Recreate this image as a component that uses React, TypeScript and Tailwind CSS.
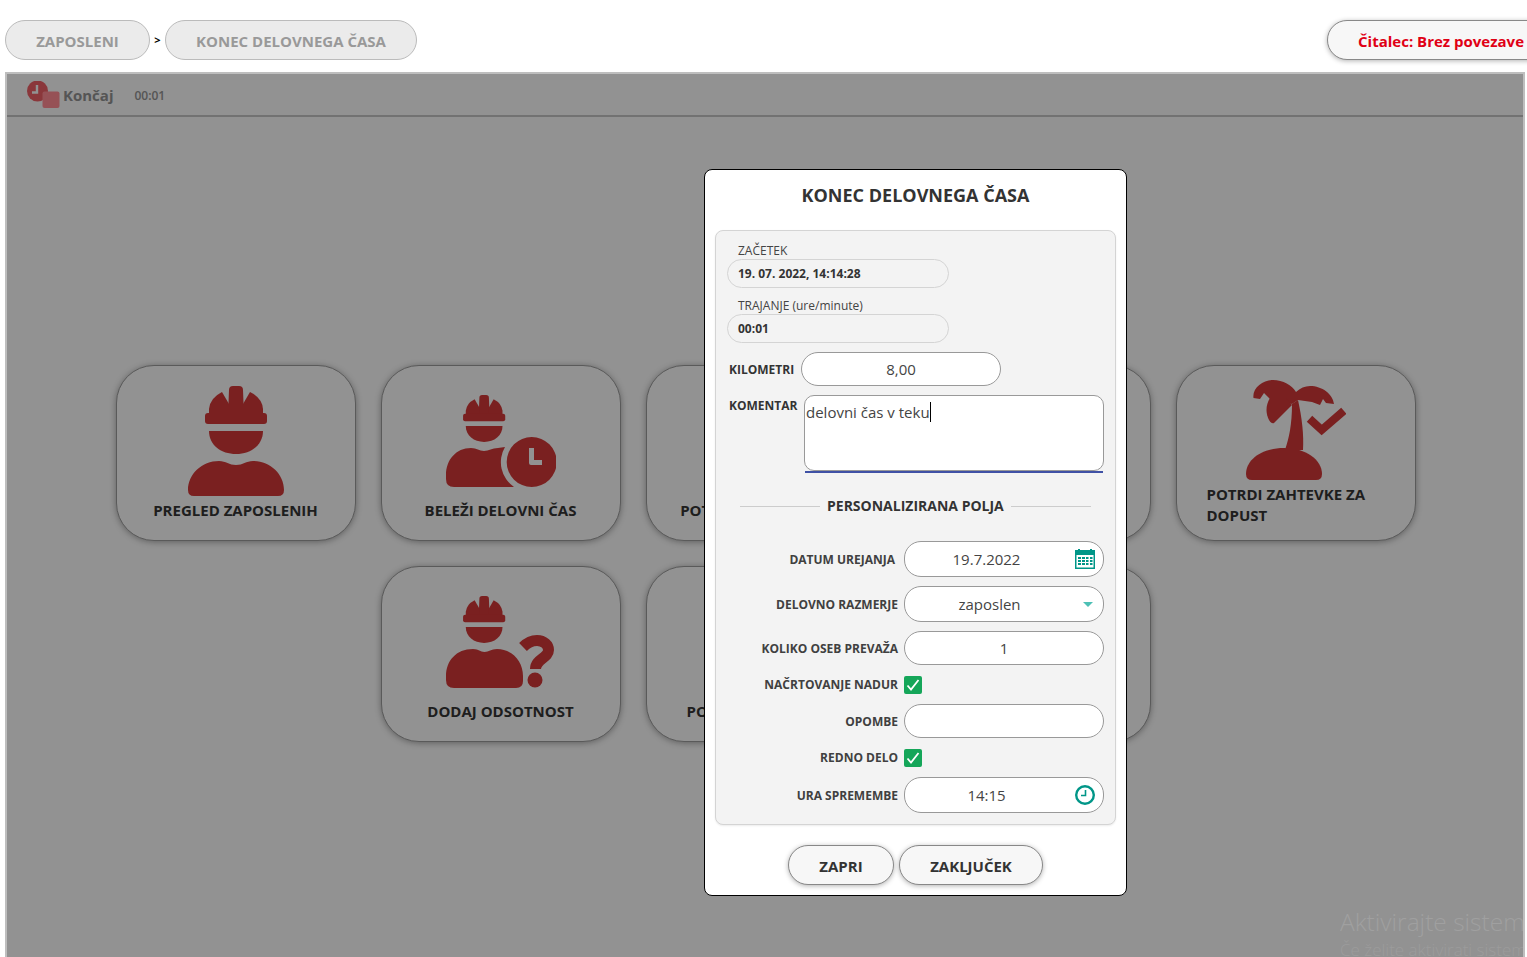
import React from "react";

const Helmet = () => (
  <>
    <path d="M41 4Q41 0 45 0H51Q55 0 55 4L56 30H40Z" />
    <path d="M34 6L41 18V30H21V23Q22 12 34 6Z" />
    <path d="M62 6L55 18V30H75V23Q74 12 62 6Z" />
    <rect x="17" y="27" width="62" height="11" rx="3" />
    <path d="M21 45H75C75 59 63 68 48 68C33 68 21 59 21 45Z" />
  </>
);

const WorkerIcon = () => (
  <svg width="96" height="110" viewBox="0 0 96 110" className="fill-[#cb3636]">
    <Helmet />
    <path d="M0 104C0 88 14 75 31 75C38 75 41 79 48 79C55 79 58 75 65 75C82 75 96 88 96 104Q96 110 90 110H6Q0 110 0 104Z" />
  </svg>
);

const WorkerClockIcon = () => (
  <svg width="110" height="93" viewBox="0 0 110 93" className="fill-[#cb3636]">
    <g transform="translate(5.5 0) scale(0.68 0.69)">
      <Helmet />
    </g>
    <path d="M0 80C0 65 10 53 25 53C31 53 33 56 38 56C43 56 46 53 52 53L59 52A30 30 0 0 0 68 92H8Q0 92 0 84Z" />
    <path
      fillRule="evenodd"
      d="M85.7 42A25 25 0 1 1 85.7 92A25 25 0 1 1 85.7 42ZM83 53V68Q83 70 85 70H96V65H88V53Z"
    />
  </svg>
);

const WorkerQuestionIcon = () => (
  <svg width="110" height="93" viewBox="0 0 110 93" className="fill-[#cb3636]">
    <g transform="translate(5.5 0) scale(0.68 0.69)">
      <Helmet />
    </g>
    <path d="M0 80C0 65 10 53 27 53C33 53 34 56 38.5 56C43 56 45 53 51 53C66 53 77 65 77 80V85Q77 92 70 92H8Q0 92 0 84Z" />
    <path
      d="M77 51C81 47 86 44.5 91 44.5C98 44.5 102.5 49 102.5 54C102.5 62 89.5 63 89.5 73"
      fill="none"
      stroke="#cb3636"
      strokeWidth="11"
    />
    <circle cx="89" cy="84" r="7.5" />
  </svg>
);

const PalmIcon = () => (
  <svg width="100" height="100" viewBox="0 0 100 100" className="fill-[#cb3636]">
    <path d="M0 94C0 80 15 68 38 68C60 68 76 80 76 94Q76 100 70 100H6Q0 100 0 94Z" />
    <path d="M46 24C46 45 43 58 39 70H57C58 55 56 38 52 20Z" />
    <path d="M7.5 18C6 8 17 0 27 0C37 0 46 5 50 12C54 8 59 6 64 6C76 6 87 14 88 24L80 23L77 19L74 25L66 22L52 20L46 24L30 20L24 19L18 13L14 19Z" />
    <path d="M24 18C19 26 20 34 23 40Q25 44 28 43L46 25L40 18Z" />
    <path d="M63.5 38.7L75.7 50L97.8 30.8" fill="none" stroke="#cb3636" strokeWidth="8" />
  </svg>
);

const Card = ({ icon, label }: { icon?: React.ReactNode; label: string }) => (
  <div className="flex h-[176px] w-[240px] shrink-0 flex-col items-center rounded-[38px] border border-[#969696] bg-[#f3f3f3] pt-[20px] shadow-[0_1px_6px_rgba(0,0,0,0.35)]">
    <div className="flex h-[110px] items-center justify-center">{icon}</div>
    <div className="mt-[4px] text-center text-[15px] leading-[21px] font-bold whitespace-nowrap text-[#333]">{label}</div>
  </div>
);

const Row = ({ label, pr, children, mt }: { label: string; pr: string; children: React.ReactNode; mt: string }) => (
  <div className={`flex items-center ${mt}`}>
    <div className={`w-[177px] text-right text-[12px] font-bold whitespace-nowrap text-[#404040] ${pr}`}>{label}</div>
    {children}
  </div>
);

const Check = () => (
  <div className="flex h-[18px] w-[18px] items-center justify-center rounded-[2px] bg-[#15a659]">
    <svg width="14" height="12" viewBox="0 0 14 12" fill="none" stroke="#fff" strokeWidth="1.8">
      <path d="M1.5 6.5L5 10.5L12.5 1" />
    </svg>
  </div>
);

const Field = ({ h, children, extra = "" }: { h: string; children?: React.ReactNode; extra?: string }) => (
  <div className={`flex w-[200px] items-center justify-center rounded-[17px] border border-[#999] bg-white text-[15px] text-[#444] ${h} ${extra}`}>
    {children}
  </div>
);

export default function App() {
  return (
    <div className="flex h-[957px] w-[1527px] flex-col overflow-hidden bg-white font-['Open_Sans',sans-serif]">
      <header className="flex h-[72px] shrink-0 items-start justify-between pt-[20px] pl-[5px]">
        <div className="flex items-center">
          <div className="flex h-[40px] w-[145px] items-center justify-center rounded-full border border-[#bbb] bg-[#ebebeb] pt-[2px] text-[15px] font-bold text-[#999]">ZAPOSLENI</div>
          <span className="flex w-[15px] justify-center text-[11px] font-bold text-black">&gt;</span>
          <div className="flex h-[40px] w-[252px] items-center justify-center rounded-full border border-[#bbb] bg-[#ebebeb] pt-[2px] text-[15px] font-bold text-[#999]">KONEC DELOVNEGA ČASA</div>
        </div>
        <div className="-mr-[30px] flex h-[40px] items-center rounded-full border border-[#888] bg-[#f7f7f7] pt-[2px] pr-[32px] pl-[30px] text-[15px] font-bold whitespace-nowrap text-[#e00015] shadow-[0_1px_5px_rgba(0,0,0,0.3)]">
          Čitalec: Brez povezave
        </div>
      </header>

      <main className="relative mr-[2px] ml-[5px] flex-1 overflow-hidden border-x-2 border-t-2 border-[#bebebe] bg-[#f3f3f3]">
        <div className="flex h-[43px] items-center border-b-2 border-[#bebebe] pl-[20px]">
          <svg width="33" height="28" viewBox="0 0 33 28" className="mt-[1px]">
            <circle cx="10.5" cy="10" r="10.5" fill="#e65d63" />
            <path d="M10 4V11.5H5" fill="none" stroke="#f3f3f3" strokeWidth="2.4" />
            <rect x="15.5" y="10.5" width="17" height="16.5" rx="2" fill="#fb8890" />
          </svg>
          <span className="ml-[3px] pt-[2px] text-[15px] font-bold text-[#8e8e8e]">Končaj</span>
          <span className="ml-[21px] pt-[2px] text-[12px] font-semibold text-[#8e8e8e]">00:01</span>
        </div>

        <div className="flex flex-col items-center gap-[25px] pt-[248px] pl-px">
          <div className="flex gap-[25px]">
            <Card icon={<WorkerIcon />} label="PREGLED ZAPOSLENIH" />
            <Card icon={<WorkerClockIcon />} label="BELEŽI DELOVNI ČAS" />
            <Card label="POTRDI DELOVNE ČASE" />
            <Card label="" />
            <div className="flex h-[176px] w-[240px] shrink-0 flex-col rounded-[38px] border border-[#969696] bg-[#f3f3f3] pt-[14px] pl-[30px] shadow-[0_1px_6px_rgba(0,0,0,0.35)]">
              <div className="flex h-[100px] justify-start pl-[39px]">
                <PalmIcon />
              </div>
              <div className="mt-[4px] w-[190px] text-[15px] leading-[21px] font-bold text-[#333]">POTRDI ZAHTEVKE ZA DOPUST</div>
            </div>
          </div>
          <div className="flex gap-[25px]">
            <Card icon={<WorkerQuestionIcon />} label="DODAJ ODSOTNOST" />
            <Card label="POTRDI ODSOTNOSTI" />
            <Card label="" />
          </div>
        </div>

        <div className="absolute inset-0 bg-black/40" />

        <div className="absolute right-0 bottom-0 left-[1333px] h-[60px] overflow-hidden font-light whitespace-nowrap text-[#a0a0a0]">
          <div className="mt-[9px] text-[24.5px] leading-[32px]">Aktivirajte sistem</div>
          <div className="text-[17px] leading-[24px] text-[#9c9c9c]">Če želite aktivirati sistem</div>
        </div>

        <div className="absolute top-[95px] left-[697px] flex h-[727px] w-[423px] flex-col items-center rounded-[8px] border border-black bg-white">
          <h1 className="mt-[12px] text-[18px] leading-[26px] font-bold text-[#333]">KONEC DELOVNEGA ČASA</h1>

          <div className="mt-[22px] h-[595px] w-[401px] rounded-[8px] border border-[#d4d4d4] bg-[#f3f3f3] pt-[11px] pl-[11px] shadow-[0_1px_2px_rgba(0,0,0,0.08)]">
            <div className="pl-[11px] text-[12px] leading-[17px] text-[#444]">ZAČETEK</div>
            <div className="flex h-[29px] w-[222px] items-center rounded-full border border-[#d4d4d4] pl-[10px] text-[12px] font-bold text-[#333]">19. 07. 2022, 14:14:28</div>
            <div className="mt-[9px] pl-[11px] text-[12px] leading-[17px] text-[#444]">TRAJANJE (ure/minute)</div>
            <div className="flex h-[29px] w-[222px] items-center rounded-full border border-[#d4d4d4] pl-[10px] text-[12px] font-bold text-[#333]">00:01</div>

            <div className="mt-[9px] flex items-center pl-[2px]">
              <div className="w-[72px] pt-[2px] text-[12px] font-bold whitespace-nowrap text-[#333]">KILOMETRI</div>
              <Field h="h-[34px]">8,00</Field>
            </div>

            <div className="mt-[9px] flex items-start pl-[2px]">
              <div className="mt-[2px] w-[75px] text-[12px] font-bold whitespace-nowrap text-[#333]">KOMENTAR</div>
              <div className="w-[300px]">
                <div className="h-[76px] rounded-[10px] border border-[#999] bg-white pt-[2px] pl-px text-[15px] leading-[22px] text-[#444]">
                  delovni čas v teku<span className="inline-block h-[20px] w-px translate-y-[4px] bg-black" />
                </div>
                <div className="ml-px h-[2px] w-[298px] bg-[#3f51a5]" />
              </div>
            </div>

            <div className="mt-[23px] flex items-center gap-[7px] pl-[13px]">
              <div className="h-px w-[80px] bg-[#ccc]" />
              <div className="text-[14px] leading-[20px] font-bold whitespace-nowrap text-[#333]">PERSONALIZIRANA POLJA</div>
              <div className="h-px w-[80px] bg-[#ccc]" />
            </div>

            <Row label="DATUM UREJANJA" pr="pt-[2px] pr-[9px]" mt="mt-[25px]">
              <Field h="h-[36px]" extra="relative pr-[35px]">
                19.7.2022
                <svg width="20" height="20" viewBox="0 0 20 20" className="absolute top-[7px] right-[8px]">
                  <path d="M0 1H20V20H0Z" fill="#009688" />
                  <path d="M3 0H5V2H3ZM15 0H17V2H15Z" fill="#009688" />
                  <rect x="1.5" y="6" width="17" height="12.5" fill="#fff" />
                  <path d="M3 8H6V10H3ZM7 8H10V10H7ZM11 8H13.5V10H11ZM15 8H17.5V10H15ZM3 11H6V13H3ZM7 11H10V13H7ZM11 11H13.5V13H11ZM15 11H17.5V13H15ZM3 14H6V16H3ZM7 14H10V16H7ZM11 14H13.5V16H11ZM15 14H17.5V16H15Z" fill="#009688" />
                </svg>
              </Field>
            </Row>
            <Row label="DELOVNO RAZMERJE" pr="pt-[2px] pr-[6px]" mt="mt-[9px]">
              <Field h="h-[36px]" extra="relative pr-[29px]">
                zaposlen
                <svg width="10" height="5" viewBox="0 0 10 5" className="absolute top-[15px] right-[10px]">
                  <path d="M0 0H10L5 5Z" fill="#4dc0b5" />
                </svg>
              </Field>
            </Row>
            <Row label="KOLIKO OSEB PREVAŽA" pr="pt-[2px] pr-[6px]" mt="mt-[9px]">
              <Field h="h-[34px]">1</Field>
            </Row>
            <Row label="NAČRTOVANJE NADUR" pr="pr-[6px]" mt="mt-[11px]">
              <Check />
            </Row>
            <Row label="OPOMBE" pr="pt-[2px] pr-[6px]" mt="mt-[10px]">
              <Field h="h-[34px]" />
            </Row>
            <Row label="REDNO DELO" pr="pr-[6px]" mt="mt-[11px]">
              <Check />
            </Row>
            <Row label="URA SPREMEMBE" pr="pt-[2px] pr-[6px]" mt="mt-[10px]">
              <Field h="h-[36px]" extra="relative pr-[35px]">
                14:15
                <svg width="20" height="20" viewBox="0 0 20 20" className="absolute top-[7px] right-[8px]" fill="none" stroke="#009688">
                  <circle cx="10" cy="10" r="8.8" strokeWidth="2.4" />
                  <path d="M10.5 5V10.5H6" strokeWidth="1.6" />
                </svg>
              </Field>
            </Row>
          </div>

          <div className="mt-[20px] flex gap-[5px]">
            <div className="flex h-[40px] w-[106px] items-center justify-center rounded-full border border-[#888] bg-[#f7f7f7] pt-[2px] text-[15px] font-bold text-[#333] shadow-[0_1px_5px_rgba(0,0,0,0.3)]">ZAPRI</div>
            <div className="flex h-[40px] w-[144px] items-center justify-center rounded-full border border-[#888] bg-[#f7f7f7] pt-[2px] text-[15px] font-bold text-[#333] shadow-[0_1px_5px_rgba(0,0,0,0.3)]">ZAKLJUČEK</div>
          </div>
        </div>
      </main>
    </div>
  );
}
